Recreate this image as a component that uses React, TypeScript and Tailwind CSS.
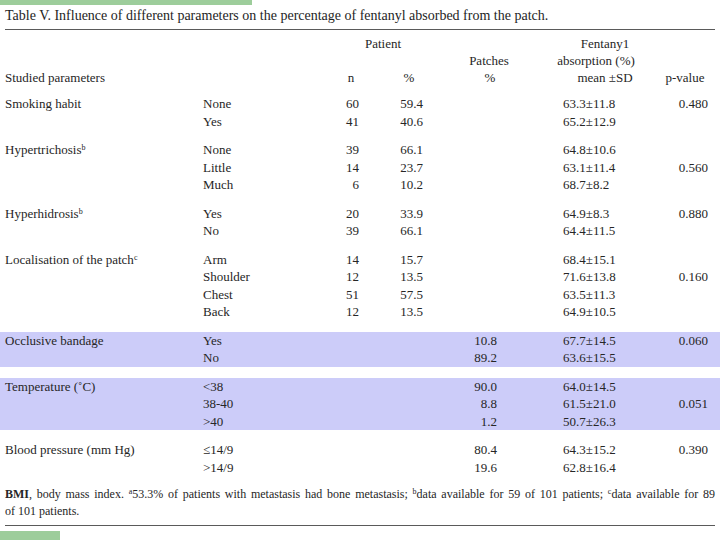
type Row = {
  cat: string;
  n?: string;
  pct?: string;
  patches?: string;
  fent: string;
  p?: string;
};

type Group = {
  label: string;
  sup?: string;
  band?: boolean;
  rows: Row[];
};

const GROUPS: Group[] = [
  {
    label: "Smoking habit",
    rows: [
      { cat: "None", n: "60", pct: "59.4", fent: "63.3±11.8", p: "0.480" },
      { cat: "Yes", n: "41", pct: "40.6", fent: "65.2±12.9" },
    ],
  },
  {
    label: "Hypertrichosis",
    sup: "b",
    rows: [
      { cat: "None", n: "39", pct: "66.1", fent: "64.8±10.6" },
      { cat: "Little", n: "14", pct: "23.7", fent: "63.1±11.4", p: "0.560" },
      { cat: "Much", n: "6", pct: "10.2", fent: "68.7±8.2" },
    ],
  },
  {
    label: "Hyperhidrosis",
    sup: "b",
    rows: [
      { cat: "Yes", n: "20", pct: "33.9", fent: "64.9±8.3", p: "0.880" },
      { cat: "No", n: "39", pct: "66.1", fent: "64.4±11.5" },
    ],
  },
  {
    label: "Localisation of the patch",
    sup: "c",
    rows: [
      { cat: "Arm", n: "14", pct: "15.7", fent: "68.4±15.1" },
      { cat: "Shoulder", n: "12", pct: "13.5", fent: "71.6±13.8", p: "0.160" },
      { cat: "Chest", n: "51", pct: "57.5", fent: "63.5±11.3" },
      { cat: "Back", n: "12", pct: "13.5", fent: "64.9±10.5" },
    ],
  },
  {
    label: "Occlusive bandage",
    band: true,
    rows: [
      { cat: "Yes", patches: "10.8", fent: "67.7±14.5", p: "0.060" },
      { cat: "No", patches: "89.2", fent: "63.6±15.5" },
    ],
  },
  {
    label: "Temperature (˚C)",
    band: true,
    rows: [
      { cat: "<38", patches: "90.0", fent: "64.0±14.5" },
      { cat: "38-40", patches: "8.8", fent: "61.5±21.0", p: "0.051" },
      { cat: ">40", patches: "1.2", fent: "50.7±26.3" },
    ],
  },
  {
    label: "Blood pressure (mm Hg)",
    rows: [
      { cat: "≤14/9", patches: "80.4", fent: "64.3±15.2", p: "0.390" },
      { cat: ">14/9", patches: "19.6", fent: "62.8±16.4" },
    ],
  },
];

function DataRow({ row, label, sup }: { row: Row; label?: string; sup?: string }) {
  return (
    <div className="flex h-[17.5px] pl-[5px] leading-[17.5px] whitespace-nowrap">
      <div className="w-[198px] shrink-0">
        {label}
        {sup && <sup className="text-[8px]">{sup}</sup>}
      </div>
      <div className="w-[120px] shrink-0">{row.cat}</div>
      <div className="w-[36px] shrink-0 text-right">{row.n}</div>
      <div className="w-[64px] shrink-0 text-right">{row.pct}</div>
      <div className="w-[74px] shrink-0 text-right">{row.patches}</div>
      <div className="w-[66px] shrink-0" />
      <div className="w-[100px] shrink-0">{row.fent}</div>
      <div className="w-[45px] shrink-0 text-right">{row.p}</div>
    </div>
  );
}

export default function App() {
  return (
    <div
      className="w-[720px] h-[540px] overflow-hidden bg-white text-[13px] text-[#262626] flex flex-col"
      style={{ fontFamily: '"Liberation Serif", "Times New Roman", serif' }}
    >
      <div className="h-[5px] w-[252px] bg-[#9dcd9b] shrink-0" />

      <div className="mt-[2px] h-[18px] pl-[5px] text-[14px] leading-[18px] whitespace-nowrap text-[#1e1e1e]">
        Table V. Influence of different parameters on the percentage of fentanyl absorbed from the patch.
      </div>
      <div className="mt-[4px] mx-[5px] h-px bg-[#5a5a5a] shrink-0" />

      {/* header */}
      <div className="mt-[5px] flex flex-col whitespace-nowrap">
        <div className="flex h-[17px] leading-[17px] pl-[5px]">
          <div className="w-[335px] shrink-0" />
          <div className="w-[86px] shrink-0 text-center">Patient</div>
          <div className="w-[129px] shrink-0" />
          <div className="w-[100px] shrink-0 text-center">Fentany1</div>
        </div>
        <div className="flex h-[17px] leading-[17px] pl-[5px]">
          <div className="w-[454px] shrink-0" />
          <div className="w-[60px] shrink-0 text-center">Patches</div>
          <div className="w-[27px] shrink-0" />
          <div className="w-[100px] shrink-0 text-center">absorption (%)</div>
        </div>
        <div className="flex h-[17px] leading-[17px] pl-[5px]">
          <div className="w-[335px] shrink-0">Studied parameters</div>
          <div className="w-[22px] shrink-0 text-center">n</div>
          <div className="w-[36px] shrink-0" />
          <div className="w-[22px] shrink-0 text-center">%</div>
          <div className="w-[59px] shrink-0" />
          <div className="w-[22px] shrink-0 text-center">%</div>
          <div className="w-[54px] shrink-0" />
          <div className="w-[100px] shrink-0 text-center">mean ±SD</div>
          <div className="w-[60px] shrink-0 text-center">p-value</div>
        </div>
      </div>

      {/* body */}
      <div className="mt-[9px] flex flex-col gap-[11px]">
        {GROUPS.map((g) => (
          <div key={g.label} className={g.band ? "bg-[#ccccf9]" : ""}>
            {g.rows.map((r, i) => (
              <DataRow
                key={r.cat}
                row={r}
                label={i === 0 ? g.label : undefined}
                sup={i === 0 ? g.sup : undefined}
              />
            ))}
          </div>
        ))}
      </div>

      {/* footnote */}
      <div className="mt-[10px] px-[5px] text-[12px] leading-[17px] whitespace-nowrap">
        <div className="text-justify [text-align-last:justify]">
          <b>BMI</b>, body mass index. <sup className="text-[8px]">a</sup>53.3% of patients with metastasis had bone
          metastasis; <sup className="text-[8px]">b</sup>data available for 59 of 101 patients;{" "}
          <sup className="text-[8px]">c</sup>data available for 89
        </div>
        <div>of 101 patients.</div>
      </div>
      <div className="mt-[5px] mx-[5px] h-px bg-[#5a5a5a] shrink-0" />
      <div className="mt-[5px] h-[9px] w-[60px] bg-[#9dcd9b] shrink-0" />
    </div>
  );
}
